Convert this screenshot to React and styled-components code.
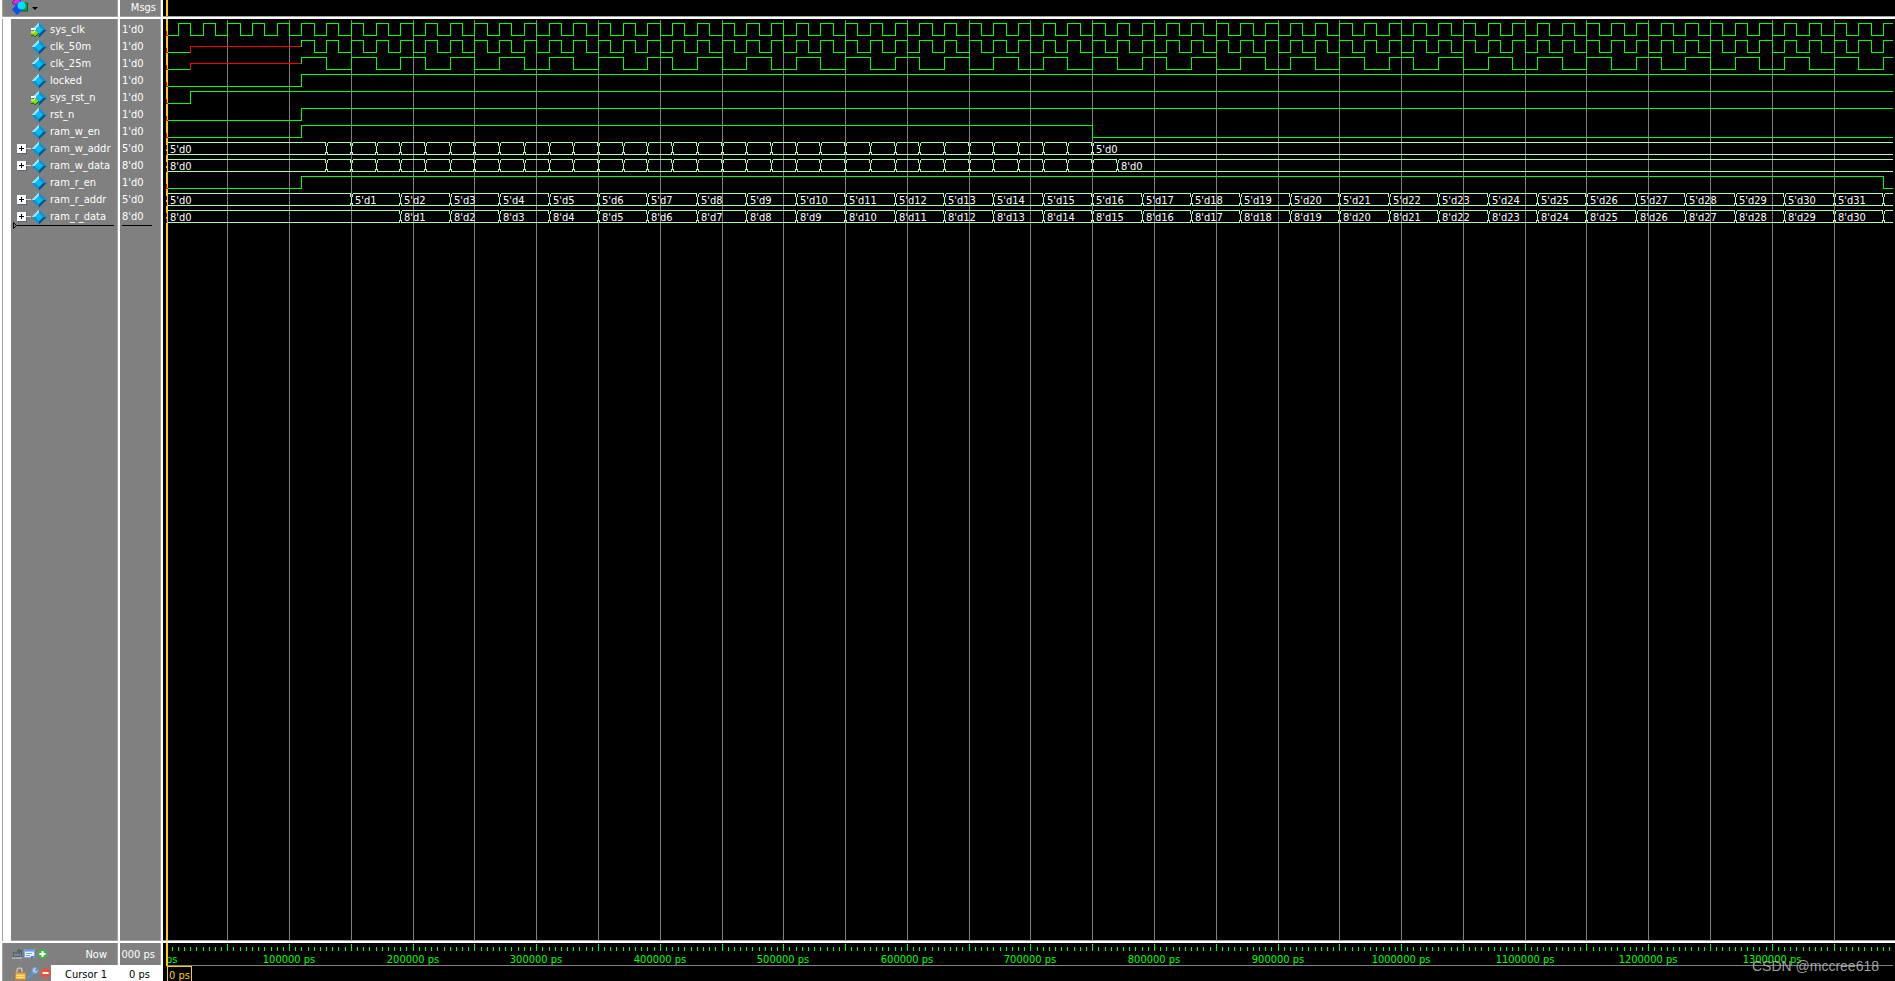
import React from "react";
import styled, { createGlobalStyle } from "styled-components";

const FONT = `"DejaVu Sans Condensed", "Noto Sans", sans-serif`;

const Global = createGlobalStyle`
  * { box-sizing: border-box; }
  html, body, #root { height: 100%; margin: 0; }
  body { background: #000; overflow: hidden; font: 11px/17px ${FONT}; color: #fff; }
  button { font: inherit; padding: 0; border: 0; background: none; }
  svg { display: block; }
`;

const PX_PER_NS = 1.2356;
const ORIGIN = 3;
const END_NS = 1397;
const ROW = 17;
const xAt = (ns) => Math.floor(ORIGIN + ns * PX_PER_NS);
const LAST_X = xAt(END_NS);

const range = (from, to, step) => {
  const out = [];
  for (let v = from; v <= to; v += step) out.push(v);
  return out;
};

const clock = (from, half) => range(from, END_NS, half);
const labelled = (bits, first, count) =>
  Array.from({ length: count }, (_, i) => ({ at: first + 40 * i, text: `${bits}'d${i + 1}` }));

const SIGNALS = [
  { name: "sys_clk", value: "1'd0", input: true, edges: clock(10, 10) },
  { name: "clk_50m", value: "1'd0", unknown: [20, 110], edges: clock(110, 10) },
  { name: "clk_25m", value: "1'd0", unknown: [20, 110], edges: clock(110, 20) },
  { name: "locked", value: "1'd0", edges: [110] },
  { name: "sys_rst_n", value: "1'd0", input: true, edges: [20] },
  { name: "rst_n", value: "1'd0", edges: [110] },
  { name: "ram_w_en", value: "1'd0", edges: [110, 750] },
  {
    name: "ram_w_addr", value: "5'd0",
    bus: [{ at: 0, text: "5'd0" }, ...range(130, 730, 20).map((at) => ({ at })), { at: 750, text: "5'd0" }],
  },
  {
    name: "ram_w_data", value: "8'd0",
    bus: [{ at: 0, text: "8'd0" }, ...range(130, 750, 20).map((at) => ({ at })), { at: 770, text: "8'd0" }],
  },
  { name: "ram_r_en", value: "1'd0", edges: [110, 1390] },
  { name: "ram_r_addr", value: "5'd0", bus: [{ at: 0, text: "5'd0" }, ...labelled(5, 150, 31), { at: 1390 }] },
  { name: "ram_r_data", value: "8'd0", bus: [{ at: 0, text: "8'd0" }, ...labelled(8, 190, 30), { at: 1390 }] },
];

const Window = styled.main`
  display: grid;
  grid-template-columns: 120px 43px minmax(0, 1fr);
  grid-template-rows: 19px minmax(0, 1fr) 40px;
  height: 100vh;
  overflow: hidden;
`;

const Cell = styled.section`
  min-width: 0;
  min-height: 0;
  overflow: hidden;
  background: ${(p) => (p.$dark ? "#000" : "#808080")};
  border-right: ${(p) => (p.$dark ? "0" : "2px solid #fff")};
  border-left: ${(p) => (p.$first ? "2px solid #fff" : "0")};
  box-shadow: ${(p) => (p.$dark ? "none" : "inset -1px 0 #a0a0a0")}${(p) => (p.$first ? ", inset 1px 0 #a0a0a0" : "")};
`;

const HeadCell = styled(Cell)`
  display: flex;
  align-items: flex-start;
  justify-content: ${(p) => (p.$end ? "flex-end" : "flex-start")};
  border-bottom: 2px solid #fff;
  box-shadow: inset 0 -1px #a0a0a0${(p) => (p.$dark ? "" : ", inset -1px 0 #a0a0a0")}${(p) => (p.$first ? ", inset 1px 0 #a0a0a0" : "")};
  padding: 0 5px 0 ${(p) => (p.$first ? 10 : 0)}px;
  line-height: 15px;
`;
const HeadTrack = styled(HeadCell)`
  padding: 0 0 0 3px;
`;
const CursorBar = styled.i`
  width: 2px;
  height: 16px;
  background: #ffd000;
`;

const MenuButton = styled.button`
  display: flex;
  align-items: flex-start;
  gap: 4px;
`;

const Gutter = styled.div`
  height: 100%;
  margin-left: 1px;
  padding-left: 8px;
  background: #fff;
`;
const NamePane = styled.div`
  height: 100%;
  padding-top: 2px;
  background: #808080;
  box-shadow: inset -1px 0 #a0a0a0, inset 0 -1px #a0a0a0;
`;
const ValuePane = styled.div`
  height: 100%;
  padding: 2px 5px 0 2px;
  box-shadow: inset -1px 0 #a0a0a0, inset 0 -1px #a0a0a0;
`;
const List = styled.ul`
  list-style: none;
  margin: 0;
  padding: 0;
`;
const NameRow = styled.li`
  display: grid;
  grid-template-columns: 6px 9px 5px 19px 1fr;
  align-items: center;
  height: ${ROW}px;
  white-space: nowrap;
`;
const ValueRow = styled.li`
  height: ${ROW}px;
`;
const Expand = styled.button`
  width: 9px;
  height: 9px;
  background: #fff;
  box-shadow: 1px 1px #5a6478;
`;
const Link = styled.i`
  height: 1px;
  background: #ddd;
`;
const EndMark = styled.div`
  display: flex;
  align-items: center;
  height: 7px;
  margin-top: -3px;
  padding: 0 4px 0 ${(p) => p.$indent || 0}px;
`;
const EndLine = styled.i`
  flex: 1;
  height: 1px;
  background: #000;
`;
const Drawing = styled.svg`
  width: 100%;
  height: 100%;
  font: 11px ${FONT};
`;
const Track = styled(Cell)`
  box-shadow: inset 0 -1px #a0a0a0;
`;
const Foot = styled(Cell)`
  border-top: 2px solid #fff;
`;
const FootRow = styled.div`
  display: flex;
  align-items: center;
  height: ${(p) => (p.$active ? 16 : 22)}px;
  white-space: nowrap;
`;
const Tools = styled.div`
  display: flex;
  align-items: center;
  flex: none;
  gap: 1px;
  width: 49px;
  padding-left: ${(p) => p.$pad}px;
`;
const Field = styled.div`
  flex: 1;
  height: 100%;
  line-height: ${(p) => (p.$active ? 20 : 24)}px;
  padding-right: ${(p) => p.$pad}px;
  text-align: right;
  color: ${(p) => (p.$active ? "#000" : "#fff")};
  background: ${(p) => (p.$active ? "#fff" : "transparent")};
`;
const Watermark = styled.div`
  position: absolute;
  right: 16px;
  bottom: 5px;
  font: 14px/20px "Liberation Sans", sans-serif;
  color: rgba(190, 190, 190, 0.85);
`;

function Diamond({ input }) {
  return (
    <svg width="16" height="16" viewBox="0 0 16 16">
      <path d="M8 0.500 15.500 8 8 15.500 0.500 8Z" fill="#1090d0" />
      <path d="M8 0.500V4L4 8H0.500Z" fill="#a0e4f8" />
      <path d="M15.500 8 8 15.500V12L12 8Z" fill="#045880" />
      <path d="M8 4 12 8 8 12 4 8Z" fill="#00bcf8" />
      {input && (
        <>
          <path d="M0 6h5v2H0Z" fill="#fff" />
          <path d="M0 9.500h3V7l4.500 4L3 15v-2.500H0Z" fill="#8cdc00" />
          <path d="M0 10h3.500V8.500" fill="none" stroke="#f4ffc0" />
          <path d="M0 13.500h3l1 1.500 4-4" fill="none" stroke="#286400" />
        </>
      )}
    </svg>
  );
}

const ShapesIcon = () => (
  <svg width="16" height="15" viewBox="0 0 16 15">
    <path d="M5-3 9 1 4 5 0 3Z" fill="#d030f0" stroke="#602080" />
    <path d="M9 3h6.500v8H9Z" fill="#10a040" stroke="#086028" />
    <path d="M5 4 11 9.500 5 15 0 9.500Z" fill="#0850f0" />
    <circle cx="9.500" cy="5.500" r="4" fill="#00e0f8" />
  </svg>
);
const GraphIcon = () => (
  <svg width="11" height="12" viewBox="0 0 11 12">
    <path d="M1 9 2 4l2 2 3-5v5l2-4 1 6Z" fill="#7d8890" stroke="#4c565e" />
    <path d="M0 10h10" stroke="#c8d4dc" />
  </svg>
);
const NoteIcon = () => (
  <svg width="12" height="12" viewBox="0 0 12 12">
    <path d="M0.500 1.500h10v8h-10Z" fill="#e4effa" stroke="#78a8dc" />
    <path d="M1 2.500h9" stroke="#5c9ce4" strokeWidth="2" />
    <path d="M2 5.500h6M2 7.500h4" stroke="#8ca8c8" />
    <path d="M7 11V8h4Z" fill="#3c80d0" />
  </svg>
);
const RoundIcon = ({ fill, plus }) => (
  <svg width="11" height="12" viewBox="0 0 11 12">
    <circle cx="5.500" cy="6" r="5" fill={fill} />
    <path d={plus ? "M2.500 6h6M5.500 3v6" : "M2.500 6h6"} stroke="#fff" strokeWidth="2" />
  </svg>
);
const LockIcon = () => (
  <svg width="11" height="13" viewBox="0 0 11 13">
    <path d="M2 6V3.500a2.500 2.500 0 0 1 5 0V5" fill="none" stroke="#c8c0a8" strokeWidth="1.500" />
    <path d="M0.500 6h10v6.500h-10Z" fill="#f8b848" stroke="#d88c20" />
    <path d="M1.500 8.500h8M1.500 10.500h8" stroke="#ffe098" />
  </svg>
);
const WrenchIcon = () => (
  <svg width="12" height="12" viewBox="0 0 12 12">
    <path d="M1.500 10.500 7 5" stroke="#5890d8" strokeWidth="3" strokeLinecap="round" />
    <path d="M10 1 8 3l1 1 2-1.500A3 3 0 1 1 10 1Z" fill="#a8ccf4" stroke="#6c9cdc" />
  </svg>
);

function Bit({ signal, top }) {
  const low = top + 12;
  const mid = top + 6;
  const parts = [];
  let d = `M${ORIGIN} ${low}`;
  if (signal.unknown) {
    const [a, b] = signal.unknown.map(xAt);
    parts.push(<path key="low" d={`M${ORIGIN} ${low}H${a}`} stroke="#0f0" />);
    parts.push(<path key="x" d={`M${a} ${low}V${mid}H${b}`} stroke="#f00" />);
    d = `M${b} ${mid}`;
  }
  signal.edges.forEach((ns, i) => {
    d += `H${xAt(ns)}V${i % 2 ? low : top}`;
  });
  parts.push(<path key="main" d={`${d}H${LAST_X}`} stroke="#0f0" />);
  return parts;
}

function Bus({ signal, top }) {
  const low = top + 12;
  return signal.bus.map(({ at }, i) => {
    const next = signal.bus[i + 1];
    const a = i ? xAt(at) + 1 : ORIGIN;
    const b = next ? xAt(next.at) - 1 : LAST_X;
    return (
      <g key={at} stroke="#b0ffb0">
        <path d={`M${a} ${top}H${b}M${a} ${low}H${b}`} />
        {i > 0 && <path d={`M${a - 2} ${top}v3M${a} ${top}v3M${a - 1} ${top + 3}v7M${a - 2} ${low}v-3M${a} ${low}v-3`} />}
      </g>
    );
  });
}

function Waves() {
  return (
    <Drawing role="img" aria-label="Waveforms" fill="none">
      <g transform="translate(0.5 0.5)" shapeRendering="crispEdges">
        {range(50, 1350, 50).map((ns) => (
          <line key={ns} x1={xAt(ns)} x2={xAt(ns)} y1="0" y2="100%" stroke="#808080" />
        ))}
        {SIGNALS.map((s, i) =>
          s.bus ? <Bus key={s.name} signal={s} top={4 + ROW * i} /> : <Bit key={s.name} signal={s} top={4 + ROW * i} />
        )}
      </g>
      <rect x={ORIGIN} width="2" height="100%" fill="#ffd000" />
      <g transform="translate(0.5 0.5)" shapeRendering="crispEdges">
        {SIGNALS.map((s, i) => {
          const top = 4 + ROW * i;
          return s.bus
            ? <path key={s.name} d={`M${ORIGIN} ${top + 2}v10`} stroke="#4020a0" strokeDasharray="4 2" />
            : <path key={s.name} d={`M${ORIGIN} ${top + 7}v5h1`} stroke="#f00" />;
        })}
      </g>
      {SIGNALS.map((s, i) =>
        (s.bus || []).filter((v) => v.text).map((v) => (
          <text key={s.name + v.at} x={xAt(v.at) + 4} y={15 + ROW * i} fill="#fff">{v.text}</text>
        ))
      )}
    </Drawing>
  );
}

function Ruler() {
  return (
    <Drawing role="img" aria-label="Time ruler">
      <g transform="translate(0.5 0.5)" shapeRendering="crispEdges">
        {range(5, 1395, 5).map((ns) => (
          <line key={ns} x1={xAt(ns)} x2={xAt(ns)} y1={ns % 50 ? 3 : 0} y2="7" stroke="#0f0" />
        ))}
        <line x1={ORIGIN} x2={LAST_X} y1="22" y2="22" stroke="#808080" />
      </g>
      <text x={ORIGIN} y="20" fill="#0f0">ps</text>
      {range(100, 1300, 100).map((ns) => (
        <text key={ns} x={xAt(ns)} y="20" fill="#0f0" textAnchor="middle">{ns * 1000} ps</text>
      ))}
      <rect x={ORIGIN} width="2" height="23" fill="#ffd000" />
      <rect x={ORIGIN + 1} y="23" width="25" height="15" fill="#ffd000" />
      <rect x={ORIGIN + 2} y="24" width="23" height="14" fill="#000" />
      <text x={ORIGIN + 3} y="36" fill="#ffd000">0 ps</text>
    </Drawing>
  );
}

export default function App() {
  return (
    <>
      <Global />
      <Window>
        <HeadCell $first>
          <MenuButton aria-label="Object menu">
            <ShapesIcon />
            <svg width="6" height="12"><path d="M0 7h6L3 10Z" fill="#000" /></svg>
          </MenuButton>
        </HeadCell>
        <HeadCell $end>Msgs</HeadCell>
        <HeadTrack $dark><CursorBar /></HeadTrack>

        <Cell $first>
          <Gutter>
            <NamePane>
              <List>
                {SIGNALS.map((s) => (
                  <NameRow key={s.name}>
                    <i />
                    {s.bus ? (
                      <Expand aria-label={`Expand ${s.name}`}>
                        <svg width="9" height="9"><path d="M4.500 2v5M2 4.500h5" stroke="#000" /></svg>
                      </Expand>
                    ) : <i />}
                    {s.bus ? <Link /> : <i />}
                    <Diamond input={s.input} />
                    <span>{s.name}</span>
                  </NameRow>
                ))}
              </List>
              <EndMark $indent={2}>
                <svg width="4" height="7"><path d="M0.500 0.500v6L3.500 3.500Z" fill="none" stroke="#000" /></svg>
                <EndLine />
              </EndMark>
            </NamePane>
          </Gutter>
        </Cell>
        <Cell>
          <ValuePane>
            <List>{SIGNALS.map((s) => <ValueRow key={s.name}>{s.value}</ValueRow>)}</List>
            <EndMark><EndLine /></EndMark>
          </ValuePane>
        </Cell>
        <Track $dark><Waves /></Track>

        <Foot $first>
          <FootRow>
            <Tools $pad={10}>
              <button aria-label="Waveform options"><GraphIcon /></button>
              <button aria-label="Edit grid and timeline"><NoteIcon /></button>
              <button aria-label="Add cursor"><RoundIcon fill="#48b048" plus /></button>
            </Tools>
            <Field $pad={11}>Now</Field>
          </FootRow>
          <FootRow $active>
            <Tools $pad={13}>
              <button aria-label="Lock cursor"><LockIcon /></button>
              <button aria-label="Edit cursor"><WrenchIcon /></button>
              <button aria-label="Remove cursor"><RoundIcon fill="#e85040" /></button>
            </Tools>
            <Field $active $pad={11}>Cursor 1</Field>
          </FootRow>
        </Foot>
        <Foot>
          <FootRow><Field $pad={6}>000 ps</Field></FootRow>
          <FootRow $active><Field $active $pad={11}>0 ps</Field></FootRow>
        </Foot>
        <Foot $dark><Ruler /></Foot>
      </Window>
      <Watermark>CSDN @mccree618</Watermark>
    </>
  );
}
